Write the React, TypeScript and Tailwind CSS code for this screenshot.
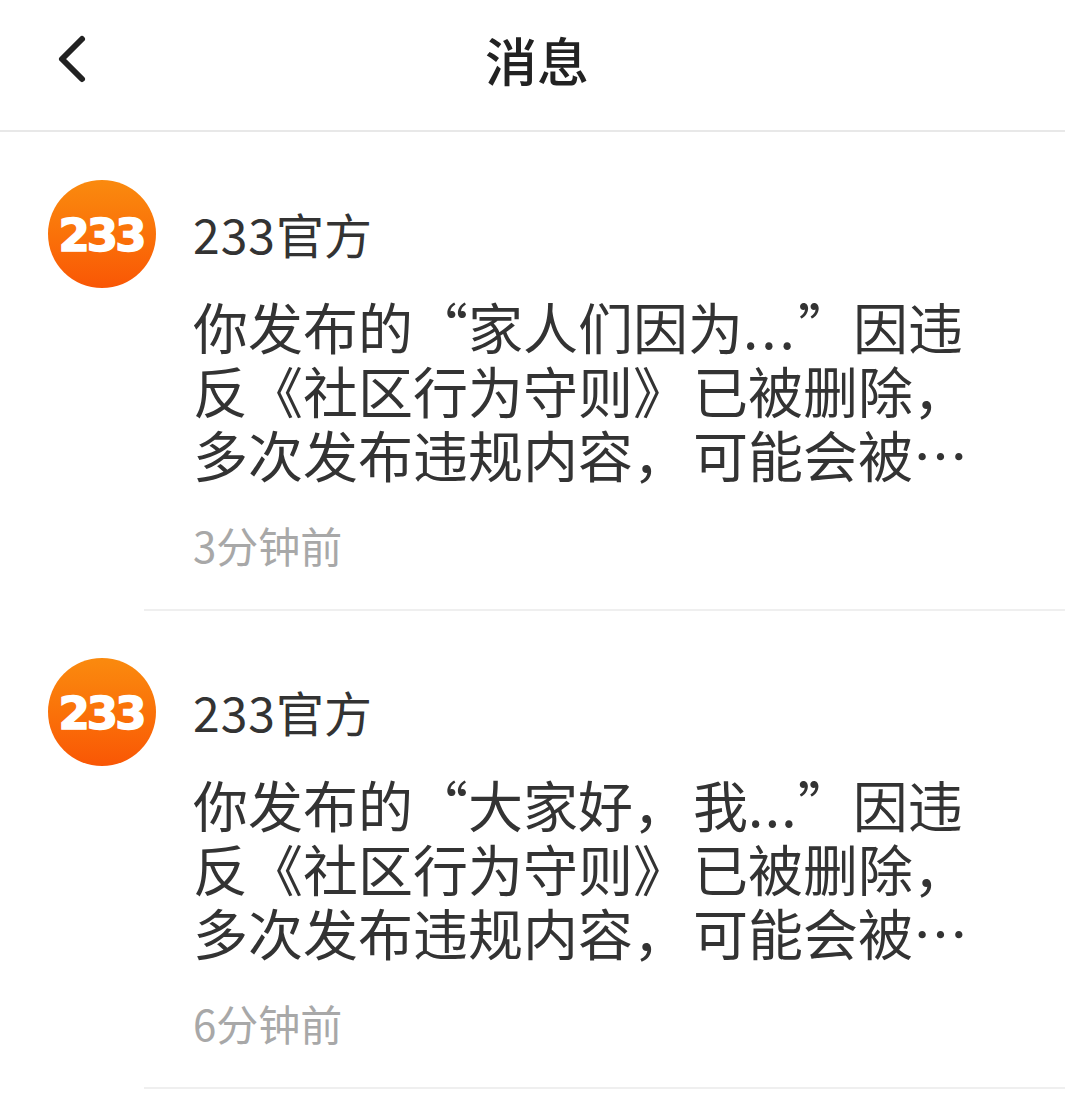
import { ChevronLeft } from 'lucide-react'

const cjk = 'font-["Noto_Sans_CJK_SC","Noto_Sans",sans-serif]'

const messages = [
  {
    quote: (
      <>
        家人们因为<span className="tracking-[3px]">...</span>
      </>
    ),
    time: '3分钟前',
  },
  {
    quote: (
      <>
        大家好<span className="tracking-[5px]">，</span>我<span className="tracking-[1.3px]">...</span>
      </>
    ),
    time: '6分钟前',
  },
]

function Avatar() {
  return (
    <div className="w-[108px] h-[108px] shrink-0 rounded-full bg-gradient-to-b from-[#fa8a0e] to-[#f95605] flex items-center justify-center overflow-hidden">
      <span className='pt-[3px] -ml-[2px] text-white font-["DejaVu_Sans",sans-serif] font-bold text-[45px] leading-none tracking-[-3px] [-webkit-text-stroke:1.5px_white]'>233</span>
    </div>
  )
}

export default function App() {
  return (
    <div className={`w-[1065px] h-[1095px] overflow-hidden bg-white ${cjk}`}>
      {/* header */}
      <div className="h-[132px] border-b-2 border-[#e8e8e8] pl-[9px] grid grid-cols-[1fr_auto_1fr] items-center">
        <ChevronLeft className="ml-[23px] mb-[12px] text-[#222222]" size={80} strokeWidth={1.8} />
        <h1 className="pb-[10px] text-[52px] leading-none font-medium text-[#222222]">消息</h1>
        <div />
      </div>

      <div className="pt-[1px]">
        {messages.map((m) => (
          <div key={m.time} className="pl-[48px] pt-[47px] flex">
            <Avatar />
            <div className="ml-[37px] flex-1 min-w-0">
              <div className="h-[108px] flex items-center pb-[2px] text-[48px] leading-none text-[#333333]">
                <span className="tracking-[1px]">233</span>官方
              </div>
              <p className="text-[55px] leading-[64px] text-[#333333] whitespace-nowrap mt-[5px]">
                你发布的“{m.quote}”因违<br />
                反《社区行为守则<span className="tracking-[5px]">》</span>已被删除，<br />
                多次发布违规内容<span className="tracking-[5px]">，</span>可能会被⋯
              </p>
              <div className="mt-[32px] text-[42px] leading-[56px] text-[#a8a8a8]">{m.time}</div>
              <div className="mt-[36px] -ml-[49px] border-b-2 border-[#efefef]" />
            </div>
          </div>
        ))}
      </div>
    </div>
  )
}
